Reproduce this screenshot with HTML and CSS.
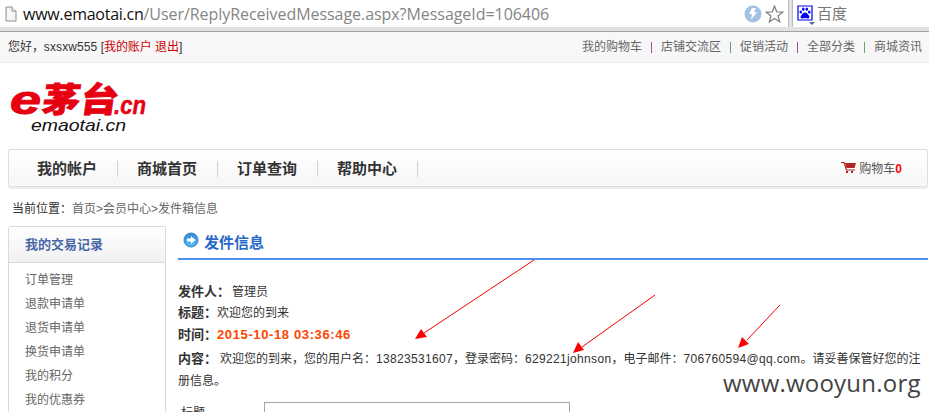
FILE: index.html
```html
<!DOCTYPE html>
<html lang="zh-CN">
<head>
<meta charset="utf-8">
<title>发件箱信息</title>
<link rel="stylesheet" href="styles.css">
</head>
<body>
<div class="browser">
  <div class="address">
    <svg class="page-icon" width="12" height="16" viewBox="0 0 12 16"><path d="M1 1h6l4 4v10H1z" fill="#f5f5f5" stroke="#8d8d8d"/><path d="M7 1v4h4" fill="#fff" stroke="#8d8d8d"/></svg>
    <span class="url"><span class="host">www.emaotai.cn</span><span class="path">/User/ReplyReceivedMessage.aspx?MessageId=106406</span></span>
    <svg class="flash" width="18" height="18" viewBox="0 0 18 18"><circle cx="9" cy="9" r="8.5" fill="#a3c2e3"/><path d="M8 3h4l-2 4h3L7 15l1-6H5z" fill="#fff"/></svg>
    <svg class="star" width="19" height="18" viewBox="0 0 19 18"><path d="M9.5 1l2.2 5.8 6.1.3-4.7 3.8 1.6 5.900-5.200-3.300-5.200 3.300 1.600-5.900L1.200 7.100l6.100-.3z" fill="#fff" stroke="#858585" stroke-width="1.300"/></svg>
  </div>
  <div class="search">
    <svg width="18" height="21" viewBox="0 0 18 21"><path d="M1 1h14v14H1z" fill="#fff" stroke="#0000f0" stroke-width="1.200"/><g fill="#0000f0"><ellipse cx="3.800" cy="7" rx="1.300" ry="1.600"/><ellipse cx="6.300" cy="4.200" rx="1.200" ry="1.600"/><ellipse cx="9.800" cy="4.200" rx="1.200" ry="1.600"/><ellipse cx="12.300" cy="7" rx="1.300" ry="1.600"/><path d="M8 7.500c2 0 2.500 1.700 3.500 2.600s1.500 3.400-.5 3.500c-1 0-2-.6-3-.6s-2 .6-3 .6c-2-.1-1.500-2.600-.5-3.500S6 7.500 8 7.500z"/></g><path d="M12 17h6l-3 3z" fill="#41699c"/></svg>
    <span>百度</span>
  </div>
</div>
<div class="topbar">
  <div class="hello">您好，<span class="user">sxsxw555</span> [<a>我的账户</a> <a>退出</a>]</div>
  <div class="links"><a>我的购物车</a><i></i><a>店铺交流区</a><i class="g"></i><a>促销活动</a><i></i><a>全部分类</a><i class="g"></i><a>商城资讯</a></div>
</div>
<header class="logo">
  <svg width="150" height="60" viewBox="0 0 150 60">
    <g fill="#e60012" stroke="#e60012" class="brand">
      <text x="1" y="34.500" stroke-width="1" font-size="40" textLength="31" lengthAdjust="spacingAndGlyphs" class="lat">e</text>
      <text transform="translate(32 32.500) skewX(-8)" stroke-width=".8" font-size="34" textLength="76" lengthAdjust="spacingAndGlyphs" class="han">茅台</text>
      <text x="105" y="34.500" stroke-width=".5" font-size="26" textLength="32" lengthAdjust="spacingAndGlyphs" class="lat">.cn</text>
    </g>
    <text x="22" y="52" font-size="17" textLength="95" lengthAdjust="spacingAndGlyphs" class="sub">emaotai.cn</text>
  </svg>
</header>
<nav class="nav">
  <a>我的帐户</a><a>商城首页</a><a>订单查询</a><a>帮助中心</a>
  <div class="cart"><svg width="16" height="12" viewBox="0 0 16 12"><path d="M0 .5h3l2.500 7.500H14" fill="none" stroke="#b42323" stroke-width="1.200"/><path d="M4 1h11l-1.500 5H5.500z" fill="#b42323"/><path d="M5 9h2v2H5zm5 0h2v2h-2z" fill="#b42323"/></svg><span>购物车</span><b>0</b></div>
</nav>
<div class="crumb"><span>当前位置：</span>首页<em>&gt;</em>会员中心<em>&gt;</em>发件箱信息</div>
<div class="columns">
  <aside class="side">
    <h2>我的交易记录</h2>
    <ul><li>订单管理</li><li>退款申请单</li><li>退货申请单</li><li>换货申请单</li><li>我的积分</li><li>我的优惠券</li></ul>
  </aside>
  <main class="main">
    <h1><svg width="16" height="16" viewBox="0 0 16 16"><defs><linearGradient id="ball" x2="0" y2="1"><stop stop-color="#3487d3"/><stop offset="1" stop-color="#55bdf8"/></linearGradient></defs><circle cx="8" cy="8" r="7" fill="url(#ball)" stroke="#357fbd"/><path d="M4 6.500h4V4l4.500 4L8 12V9.500H4z" fill="#fff"/></svg><span>发件信息</span></h1>
    <div class="message">
      <p class="from"><b>发件人：</b>管理员</p>
      <p class="subject"><b>标题：</b>欢迎您的到来</p>
      <p class="time"><b>时间：</b><strong>2015-10-18 03:36:46</strong></p>
      <p class="body"><b>内容：</b>欢迎您的到来，您的用户名：<span>13823531607</span>，登录密码：<span>629221johnson</span>，电子邮件：<span>706760594@qq.com</span>。请妥善保管好您的注<br>册信息。</p>
    </div>
    <div class="reply"><label>标题</label><div class="input"></div></div>
  </main>
</div>
<svg class="arrows" width="929" height="412" viewBox="0 0 929 412"><g stroke="#f00000" fill="none"><path d="M534 260L424 333M655 295L582 347M780 305L747 340"/></g><g fill="#f00"><path d="M415 339l6-10 6 8zM573 353l5-11 6 8zM738 348l4-11 7 7z"/></g></svg>
<div class="watermark">www.wooyun.org</div>
</body>
</html>
```
FILE: styles.css
```css
* { box-sizing: border-box; }
html, body { margin: 0; padding: 0; height: 412px; overflow: hidden; }
body { position: relative; background: #fff; color: #333; font: 12px/16px "Liberation Sans", "Noto Sans CJK SC", sans-serif; }
h1, h2, p, ul { margin: 0; padding: 0; }
svg { display: block; flex: none; }
.browser { display: flex; height: 32px; padding-bottom: 4px; background: #e1e1e1; border-bottom: 1px solid #a3a3a3; }
.address { display: flex; align-items: center; width: 789px; padding-left: 5px; background: #fff; border-right: 1px solid #bbb; }
.url { flex: none; width: 728px; margin-left: 6px; font: 16px/26px "Open Sans", sans-serif; white-space: nowrap; }
.host { color: #111; letter-spacing: -.25px; }
.path { color: #858585; letter-spacing: -.05px; }
.flash { margin-left: -7px; }
.star { margin-left: 3px; }
.search { display: flex; align-items: center; flex: 1; margin-left: 3px; padding-left: 4px; background: #fff; border-left: 1px solid #bbb; color: #777; font-size: 15px; }
.search svg { margin-top: 3px; }
.search span { margin-left: 2px; }
.topbar { display: flex; justify-content: space-between; height: 31px; padding: 7px 7px 0 8px; background: #f7f7f7; border-bottom: 1px solid #ececec; }
.hello { letter-spacing: -.05px; }
.user { letter-spacing: .1px; }
.hello a { color: #c00; }
.links { display: flex; color: #666; }
.links i { width: 1px; height: 11px; margin: 3px 9px 0; background: #a44ba4; }
.links .g { background: #69a469; }
.logo { height: 86px; padding: 16px 0 0 9px; }
.brand .lat { font-family: "Liberation Sans", sans-serif; font-weight: bold; font-style: italic; }
.brand .han { font-family: "Noto Sans CJK SC", sans-serif; font-weight: 900; }
.sub { font-family: "Liberation Sans", sans-serif; font-style: italic; fill: #111; }
.nav { display: flex; align-items: center; height: 38px; margin: 0 1px 0 8px; padding: 2px 0 0 9px; border: 1px solid #dedede; border-radius: 2px; background: linear-gradient(#fff, #f6f6f6); box-shadow: inset 0 -1px #fff, 0 2px #eee; }
.nav > a { width: 100px; height: 16px; border-right: 1px solid #d2d2d2; padding-left: 19px; font-size: 15px; line-height: 16px; font-weight: bold; }
.cart { display: flex; align-items: center; margin-left: auto; padding-right: 25px; color: #555; }
.cart svg { margin-bottom: 2px; }
.cart span { margin-left: 2px; }
.cart b { color: #f00; }
.crumb { height: 38px; margin-top: 1px; padding: 13px 0 0 12px; color: #666; }
.crumb span { color: #333; }
.crumb em { font-style: normal; }
.columns { display: flex; gap: 12px; padding-left: 8px; height: 186px; }
.side { width: 158px; height: 200px; border: 1px solid #dadada; border-radius: 2px; color: #666; }
.side h2 { height: 36px; padding-left: 16px; border-bottom: 1px solid #dadada; background: linear-gradient(#fff, #f1f1f1); color: #4967a8; font-size: 13px; line-height: 35px; }
.side ul { list-style: none; padding: 5px 0 0 16px; line-height: 24px; }
.main { width: 750px; }
.main h1 { display: flex; height: 34px; padding: 6px 0 0 5px; border-bottom: 2px solid #4b91ed; color: #2868c8; font-size: 15px; line-height: 22px; }
.main h1 span { margin-left: 5px; }
.message { padding-top: 22px; white-space: nowrap; line-height: 21px; }
.message p { height: 21px; }
.message b { font-size: 13px; line-height: 16px; }
.from b { margin-right: 2px; }
.message .time { height: 24px; padding-top: 1px; }
.time strong { color: #ff4500; font-size: 13px; letter-spacing: .62px; line-height: 16px; }
.message .body { height: 44px; line-height: 22px; }
.body b { margin-right: 3px; }
.body span { letter-spacing: .33px; }
.reply { display: flex; margin-top: 10px; padding-left: 3px; }
.reply label { width: 83px; padding-top: 3px; }
.input { width: 306px; height: 22px; border: 1px solid #a5a5a5; }
.arrows { position: absolute; top: 0; left: 0; }
.watermark { position: absolute; left: 723px; top: 371px; color: #444; font: 24px/24px "Open Sans", sans-serif; letter-spacing: .22px; white-space: nowrap; }
```
